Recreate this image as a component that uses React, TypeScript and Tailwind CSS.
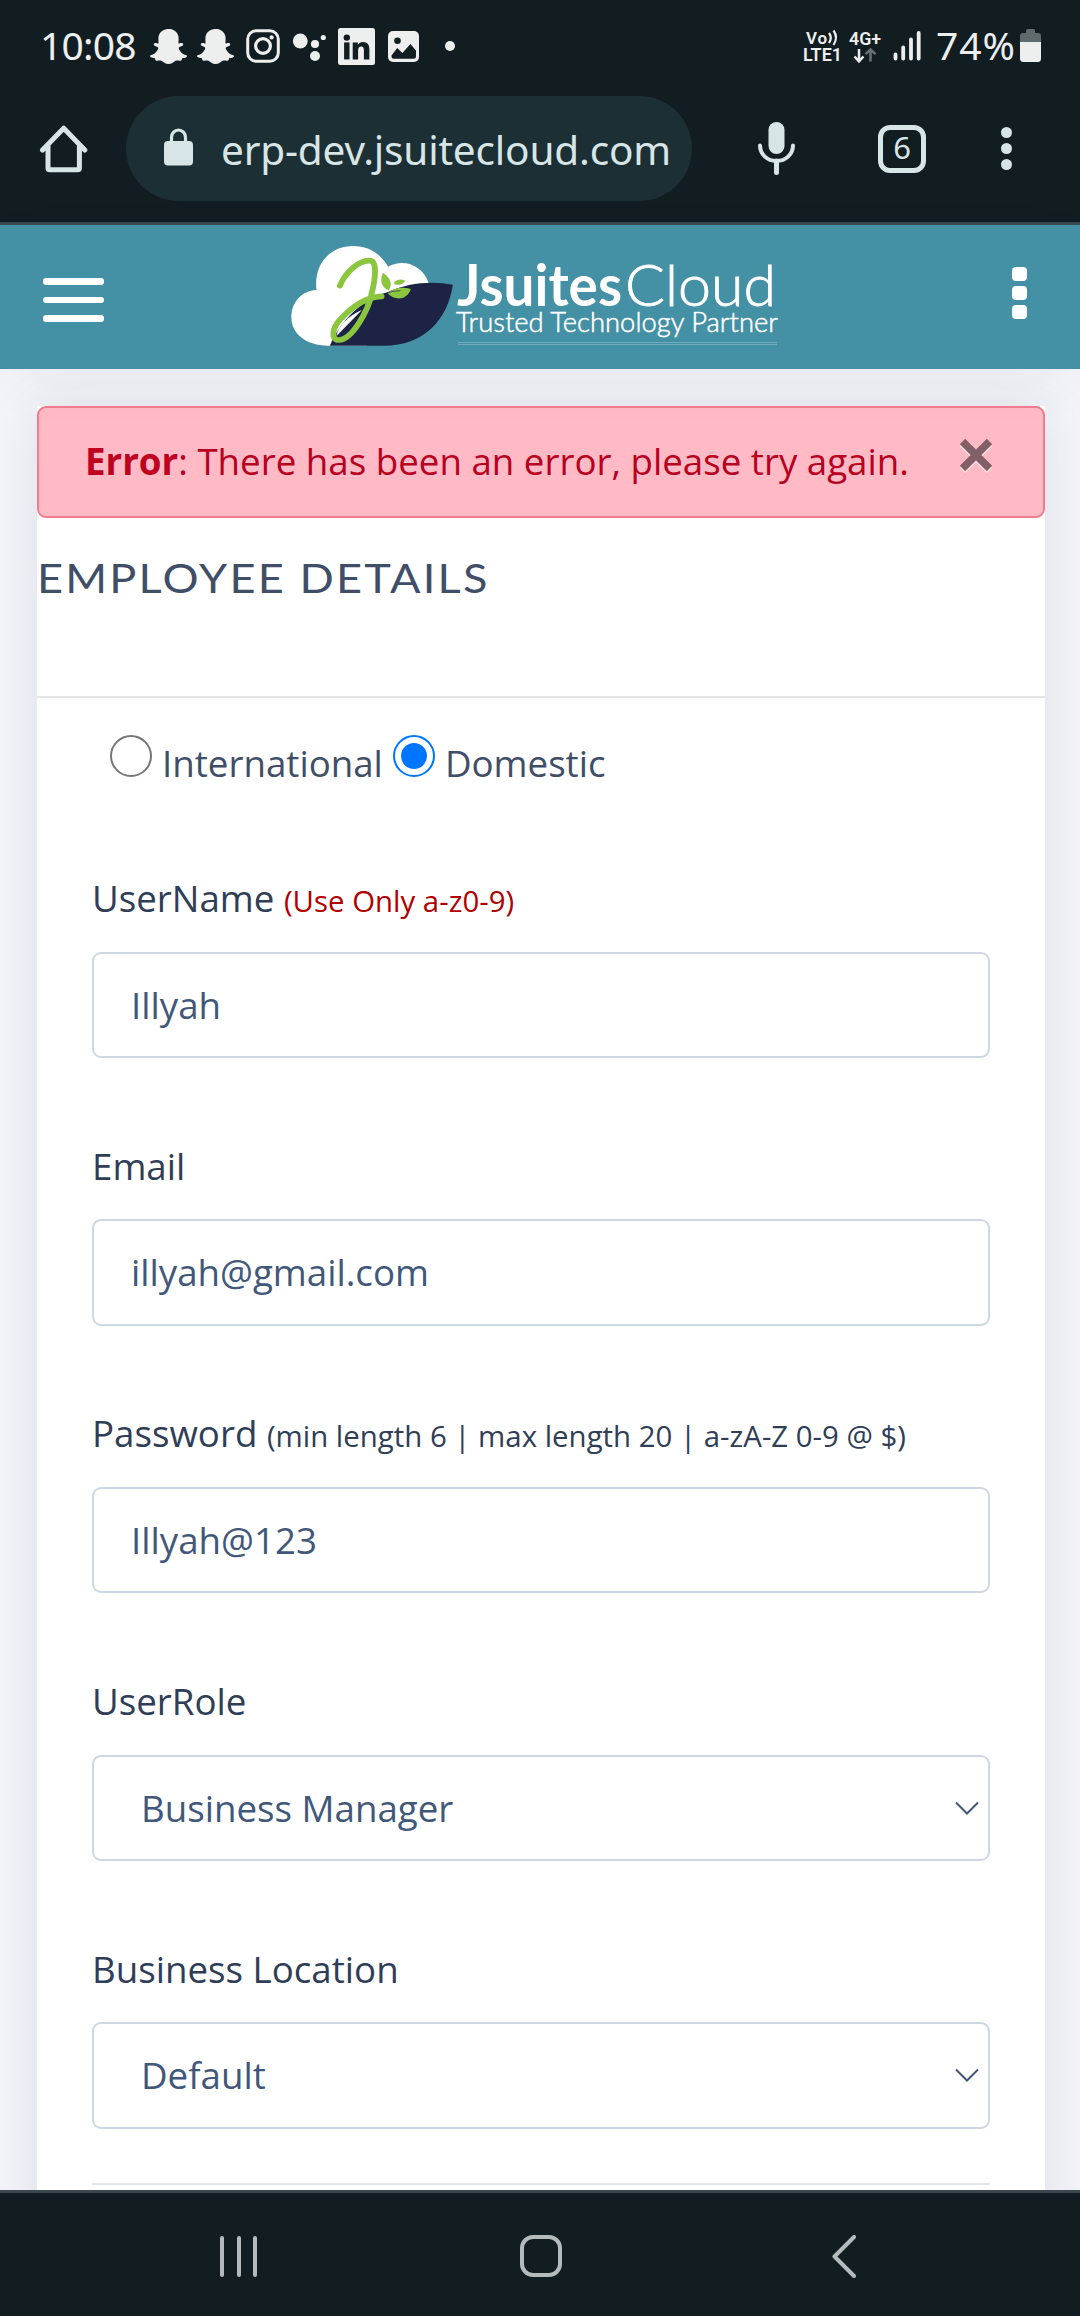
import React from "react";
import { FaSnapchatGhost } from "react-icons/fa";

function StatusBar() {
  return (
    <div className="flex h-[92px] items-center font-['Noto_Sans',sans-serif] text-[#edefef]">
      <span className="mb-[3px] ml-[40px] w-[108px] text-[39px] leading-none tracking-[-0.800px]">10:08</span>
      <FaSnapchatGhost className="ml-[2px] h-[37px] w-[37px]" />
      <FaSnapchatGhost className="ml-[10px] h-[37px] w-[37px]" />
      <svg className="ml-[12px] h-[34px] w-[34px]" viewBox="0 0 34 34" fill="none" stroke="currentColor">
        <rect x="1.7" y="1.7" width="30.6" height="30.6" rx="8.5" strokeWidth="3" />
        <circle cx="17" cy="17" r="7.4" strokeWidth="3.2" />
        <circle cx="25.6" cy="8.4" r="2.1" fill="currentColor" stroke="none" />
      </svg>
      <svg className="ml-[12px] h-[34px] w-[36px]" viewBox="292 29 36 34" fill="currentColor">
        <circle cx="300.3" cy="41" r="7.4" />
        <circle cx="315" cy="44" r="4.1" />
        <circle cx="323.3" cy="37.5" r="2.6" />
        <circle cx="315" cy="56" r="5" />
      </svg>
      <svg className="ml-[10px] h-[37px] w-[37px]" viewBox="0 0 37 37">
        <rect width="37" height="37" rx="2.5" fill="#edefef" />
        <g fill="#121d21">
          <circle cx="8.8" cy="9.6" r="3.2" />
          <rect x="6.1" y="14.4" width="5.4" height="17" />
          <path d="M14.7 14.4h5.1v2.4c1.2-1.9 3-2.9 5.3-2.9 4.4 0 6.3 2.8 6.3 7.4v10.1h-5.500v-9.1c0-2.4-.7-3.9-2.6-3.9-2.200 0-3.200 1.600-3.200 3.900v9.100h-5.400z" />
        </g>
      </svg>
      <svg className="ml-[13px] h-[31px] w-[31px]" viewBox="0 0 31 31">
        <rect width="31" height="31" rx="5" fill="#edefef" />
        <circle cx="9.500" cy="9.800" r="3.300" fill="#121d21" />
        <path d="M3.500 24.500 9.200 17l5.200 5 8-9 5.600 6.500v6q0 2.300-2.300 2.300H5.800q-2.300 0-2.300-2.300z" fill="#121d21" />
      </svg>
      <span className="ml-[26px] h-[10px] w-[10px] rounded-full bg-[#edefef]" />
      <svg className="ml-[346px] h-[40px] w-[124px] shrink-0" viewBox="801 26 124 40" fill="none" stroke="currentColor">
        <g fill="currentColor" stroke="none" fontFamily="Roboto, sans-serif" fontWeight="600">
          <text x="806" y="43.500" fontSize="17" textLength="21">Vo</text>
          <text x="803" y="61" fontSize="18" textLength="39" lengthAdjust="spacingAndGlyphs">LTE1</text>
          <text x="849" y="45" fontSize="18" textLength="32" lengthAdjust="spacingAndGlyphs">4G+</text>
        </g>
        <path d="M829 33q3.500 4.500 0 10M833.500 30.500q5 7 0 14.500" strokeWidth="2.200" />
        <path d="M859 49v12M854.500 56.500l4.500 4.800 4.500-4.800" strokeWidth="2.500" />
        <path d="M870.500 61.500V50M865.500 54.200l5-4.700 5 4.700" strokeWidth="2.500" opacity=".4" />
        <path d="M895.500 54.500v4M903.200 47.500v11M911 39.500v19M918.700 33v25.500" strokeWidth="3.800" strokeLinecap="round" />
      </svg>
      <span className="mb-[3px] ml-[11px] w-[84px] whitespace-nowrap text-[39px] leading-none tracking-[0.900px]">74%</span>
      <svg className="h-[34px] w-[21px]" viewBox="0 0 21 34">
        <path d="M6 1.500q0-1.500 1.500-1.500h6q1.500 0 1.500 1.500V4h3q3 0 3 3v6H0V7q0-3 3-3h3z" fill="#60696c" />
        <path d="M0 13h21v16.500q0 3.500-3.500 3.500h-14Q0 33 0 29.500z" fill="#edefef" />
      </svg>
    </div>
  );
}

function AddressBar() {
  return (
    <div className="flex h-[130px] items-start pt-[4px] text-[#d8e5e6]">
      <svg className="mt-[28px] ml-[39px] h-[50px] w-[50px]" viewBox="0 0 50 50" fill="none" stroke="currentColor" strokeWidth="5" strokeLinejoin="round" strokeLinecap="round">
        <path d="M3.500 26 24.700 4.200 45.800 26M9 22v22q0 1.800 1.800 1.800h27.800q1.800 0 1.800-1.800V22" />
      </svg>
      <div className="ml-[37px] flex h-[105px] w-[566px] items-center rounded-full bg-[#1c2f34]">
        <svg className="mt-[-3px] ml-[38px] h-[38px] w-[29px]" viewBox="0 0 29 38" fill="none">
          <path d="M7.500 16V9.500a7 7.500 0 0 1 14 0V16" stroke="currentColor" strokeWidth="3.200" />
          <rect y="13" width="29" height="24.500" rx="4" fill="currentColor" />
        </svg>
        <span className="mt-[3px] ml-[28px] whitespace-nowrap font-['Noto_Sans',sans-serif] text-[40.500px] leading-none tracking-[-0.180px]">erp-dev.jsuitecloud.com</span>
      </div>
      <svg className="mt-[25px] ml-[65px] h-[56px] w-[40px]" viewBox="757 121 40 56" fill="none" stroke="currentColor">
        <rect x="768.500" y="122" width="16" height="32" rx="8" fill="currentColor" stroke="none" />
        <path d="M760 145.500c0 9 7.500 15.500 16.500 15.500s16.500-6.500 16.500-15.500" strokeWidth="4" strokeLinecap="round" />
        <path d="M776.500 161v11.500" strokeWidth="5" strokeLinecap="round" />
      </svg>
      <div className="mt-[29px] ml-[81px] flex h-[48px] w-[48px] items-center justify-center rounded-[12px] border-[5px] border-[#d8e5e6] pb-[4px] font-['Noto_Sans',sans-serif] text-[31px] leading-none">6</div>
      <div className="mt-[31px] ml-[75px] flex flex-col gap-[5px]">
        <i className="h-[11px] w-[11px] rounded-full bg-current" />
        <i className="h-[11px] w-[11px] rounded-full bg-current" />
        <i className="h-[11px] w-[11px] rounded-full bg-current" />
      </div>
    </div>
  );
}

function Logo() {
  return (
    <svg className="h-[106px] w-[490px]" viewBox="290 243 490 106">
      <g transform="translate(260 220) scale(.34439 .33333)">
        <path d="M204 377C140 380 91 345 91 292c0-45 30-80 73-82C155 130 205 78 270 78c45 0 80 22 102 62 45-25 100-5 118 50l-60 90-120 97z" fill="#fff" />
        <path d="M203 377C235 300 300 235 370 217c60-30 130-35 190-23C545 300 475 377 360 377z" fill="#1d2345" />
        <path d="M296 270 222 348c5-30 35-62 74-78z" fill="#fff" />
        <path d="M232 197C248 155 290 119 320 122C342 125 334 180 324 222C314 272 268 358 230 360C205 361 208 325 235 296C268 260 310 230 353 229" fill="none" stroke="#8cc63f" strokeWidth="17" strokeLinecap="round" />
        <path d="M357 158c20 14 30 32 17 53-20-8-28-28-17-53zM388 190c6-12 22-14 34-8-8 12-22 17-34 8zM370 220c20-18 44-20 68-13-10 32-44 38-68 13z" fill="#8cc63f" />
        <path d="M360 224q22-13 48-12" fill="none" stroke="#1d2345" strokeWidth="2" />
      </g>
      <g fill="#fff" fontFamily="Lato, sans-serif">
        <text x="457" y="306" fontSize="57" fontWeight="700" textLength="165" lengthAdjust="spacingAndGlyphs">Jsuites</text>
        <text x="625" y="306" fontSize="57" fontWeight="300" stroke="#fff" strokeWidth=".8" textLength="151" lengthAdjust="spacingAndGlyphs">Cloud</text>
        <text x="456" y="332" fontSize="27" fontWeight="300" stroke="#fff" strokeWidth=".5" textLength="322" lengthAdjust="spacingAndGlyphs">Trusted Technology Partner</text>
      </g>
      <path d="M458 342.500h319M458 344.500h319" stroke="#7db2c1" strokeWidth=".8" />
    </svg>
  );
}

function SiteHeader() {
  return (
    <header className="relative flex h-[144px] bg-[#4490a5] shadow-[0_16px_60px_-12px_rgba(60,65,70,0.080)]">
      <div className="mt-[53px] ml-[43px] flex w-[61px] flex-col gap-[12px]">
        <i className="h-[6.500px] rounded-[3px] bg-white" />
        <i className="h-[6.500px] rounded-[3px] bg-white" />
        <i className="h-[6.500px] rounded-[3px] bg-white" />
      </div>
      <div className="mt-[18px] ml-[186px]">
        <Logo />
      </div>
      <div className="mt-[42px] ml-[232px] flex flex-col gap-[5px]">
        <i className="h-[14px] w-[15px] rounded-[4px] bg-white" />
        <i className="h-[14px] w-[15px] rounded-[4px] bg-white" />
        <i className="h-[14px] w-[15px] rounded-[4px] bg-white" />
      </div>
    </header>
  );
}

function Radio({ label, checked = false }: { label: string; checked?: boolean }) {
  return (
    <label className="flex items-start">
      {checked ? (
        <i className="flex h-[42px] w-[42px] items-center justify-center rounded-full border-[2.500px] border-[#0075ff]">
          <b className="h-[26px] w-[26px] rounded-full bg-[#0075ff]" />
        </i>
      ) : (
        <i className="h-[42px] w-[42px] rounded-full border-[2.500px] border-[#767676]" />
      )}
      <span className="ml-[10px] pt-[2px] leading-[52px]">{label}</span>
    </label>
  );
}

type FieldProps = { label: string; note?: string; noteRed?: boolean; value: string; select?: boolean };

function Field({ label, note, noteRed, value, select }: FieldProps) {
  return (
    <div className="mb-[76.800px]">
      <div className="h-[60px] whitespace-nowrap leading-[63px] text-[#2f3e56]">
        {label}{" "}
        {note && <span className={noteRed ? "text-[29.400px] text-[#b00000]" : "text-[29.400px]"}>{note}</span>}
      </div>
      <div className="mt-[24.700px] flex h-[106.200px] items-center justify-between rounded-[9px] border-2 border-[#cfd6e4] text-[#41587a]">
        <span className={select ? "mt-[1px] ml-[47px]" : "mt-[1px] ml-[37px]"}>{value}</span>
        {select && (
          <svg className="mr-[9px] h-[14px] w-[24px]" viewBox="0 0 24 14" fill="none" stroke="currentColor" strokeWidth="2">
            <path d="M1 1.500 12 12.500 23 1.500" />
          </svg>
        )}
      </div>
    </div>
  );
}

function NavBar() {
  return (
    <nav className="flex h-[126px] items-start border-t-[3px] border-[#3b484d] bg-[#121d21] pt-[42px]">
      <div className="mt-[1px] ml-[220px] flex gap-[12.500px]">
        <i className="h-[41px] w-[4px] rounded-sm bg-[#b4bbbc]" />
        <i className="h-[41px] w-[4px] rounded-sm bg-[#b4bbbc]" />
        <i className="h-[41px] w-[4px] rounded-sm bg-[#b4bbbc]" />
      </div>
      <i className="ml-[263px] h-[42px] w-[42px] rounded-[13px] border-4 border-[#b4bbbc]" />
      <svg className="ml-[269px] h-[43px] w-[26px]" viewBox="0 0 26 43" fill="none" stroke="#b4bbbc" strokeWidth="4" strokeLinecap="round" strokeLinejoin="round">
        <path d="M23 2 3.500 21.500 23 41" />
      </svg>
    </nav>
  );
}

export default function App() {
  return (
    <div className="flex h-[2316px] w-[1080px] flex-col overflow-hidden bg-[#121d21]">
      <StatusBar />
      <AddressBar />
      <div className="h-[3px] shrink-0 bg-[#3a4a4f]" />
      <div className="relative z-10">
        <SiteHeader />
      </div>
      <main className="flex-1 overflow-hidden bg-[#f4f5fa] px-[37px] pt-[37px] font-['Open_Sans',sans-serif] text-[36.700px] text-[#404e67]">
        <section className="h-[1900px] w-[1008px] bg-white shadow-[0_2px_50px_0_rgba(40,40,70,0.100)]">
          <div className="flex h-[112px] items-center rounded-[9px] border-2 border-[#f27c8e] bg-[#ffbac5] text-[#b8001f]">
            <p className="mb-[1px] ml-[46px] w-[828px] whitespace-nowrap leading-none">
              <strong className="font-bold text-[#c0001f]">Error</strong>: There has been an error, please try again.
            </p>
            <svg className="mb-[12px] ml-[45px] h-[38px] w-[36px]" viewBox="0 0 36 38" fill="none" strokeWidth="7.500">
              <path d="m4.500 6.500 27 27m0-27-27 27" stroke="#ffe3e8" />
              <path d="m4.500 4.500 27 27m0-27-27 27" stroke="#835f66" />
            </svg>
          </div>
          <div className="h-[180px] border-b-2 border-[#e4e5e7] pt-[33px]">
            <h1 className="origin-left scale-x-110 whitespace-nowrap font-['Lato',sans-serif] text-[41px] leading-[54px] tracking-[2px]">EMPLOYEE DETAILS</h1>
          </div>
          <div className="flex h-[169px] gap-[10px] pt-[37px] pl-[73px]">
            <Radio label="International" />
            <Radio label="Domestic" checked />
          </div>
          <div className="mx-[55px]">
            <Field label="UserName" note="(Use Only a-z0-9)" noteRed value="Illyah" />
            <Field label="Email" value="illyah@gmail.com" />
            <Field label="Password" note="(min length 6 | max length 20 | a-zA-Z 0-9 @ $)" value="Illyah@123" />
            <Field label="UserRole" value="Business Manager" select />
            <Field label="Business Location" value="Default" select />
            <hr className="mt-[-22px] border-t-2 border-[#e4e5e7]" />
          </div>
        </section>
      </main>
      <NavBar />
    </div>
  );
}
